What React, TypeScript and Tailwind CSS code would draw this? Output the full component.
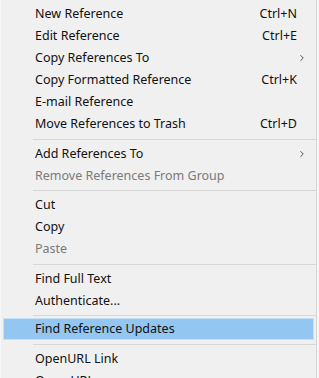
import { ChevronRight } from "lucide-react";

type Item =
  | { kind: "sep"; h: string }
  | {
      kind: "item";
      label: string;
      shortcut?: string;
      submenu?: boolean;
      disabled?: boolean;
      active?: boolean;
    };

const items: Item[] = [
  { kind: "item", label: "New Reference", shortcut: "Ctrl+N" },
  { kind: "item", label: "Edit Reference", shortcut: "Ctrl+E" },
  { kind: "item", label: "Copy References To", submenu: true },
  { kind: "item", label: "Copy Formatted Reference", shortcut: "Ctrl+K" },
  { kind: "item", label: "E-mail Reference" },
  { kind: "item", label: "Move References to Trash", shortcut: "Ctrl+D" },
  { kind: "sep", h: "h-[8px]" },
  { kind: "item", label: "Add References To", submenu: true },
  { kind: "item", label: "Remove References From Group", disabled: true },
  { kind: "sep", h: "h-[7px]" },
  { kind: "item", label: "Cut" },
  { kind: "item", label: "Copy" },
  { kind: "item", label: "Paste", disabled: true },
  { kind: "sep", h: "h-[8px]" },
  { kind: "item", label: "Find Full Text" },
  { kind: "item", label: "Authenticate..." },
  { kind: "sep", h: "h-[6px]" },
  { kind: "item", label: "Find Reference Updates", active: true },
  { kind: "sep", h: "h-[8px]" },
  { kind: "item", label: "OpenURL Link" },
  { kind: "item", label: "Open URL" },
];

export default function App() {
  return (
    <div className="h-[378px] w-[319px] overflow-hidden bg-[#f7f7f7]">
      <div
        className="ml-[1px] flex h-full w-[316px] flex-col border-r border-[#d4d4d4] bg-[#f0f0f0] pt-[3px] text-[12.5px] text-[#111]"
        style={{ fontFamily: '"Noto Sans", "Open Sans", sans-serif' }}
      >
        {items.map((item, i) => {
          if (item.kind === "sep") {
            return (
              <div key={i} className={`flex ${item.h} shrink-0 items-center pl-[32px]`}>
                <div className="h-px w-full bg-[#d7d7d7]" />
              </div>
            );
          }
          return (
            <div
              key={i}
              className={
                item.active
                  ? "mx-[2px] flex h-[22px] shrink-0 items-center border border-[#c4e1f8] bg-[#93c6f0] pl-[31px] pr-[17px]"
                  : "flex h-[22px] shrink-0 items-center pl-[34px] pr-[19px]"
              }
            >
              <span className={item.disabled ? "text-[#7a7a7a]" : ""}>{item.label}</span>
              <span className="ml-auto">{item.shortcut}</span>
              {item.submenu && (
                <ChevronRight className="-mr-[10px] size-[10px] text-[#444]" strokeWidth={2.2} />
              )}
            </div>
          );
        })}
      </div>
    </div>
  );
}
